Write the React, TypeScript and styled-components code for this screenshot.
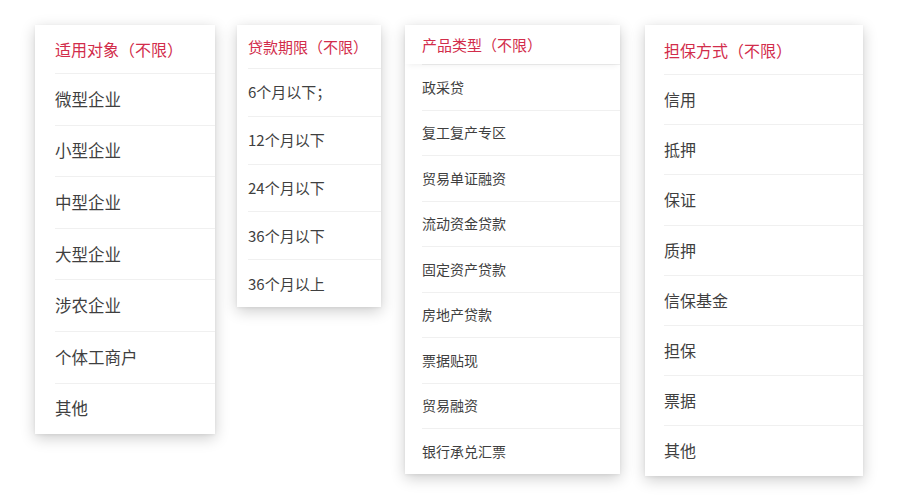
import React from "react";
import styled, { createGlobalStyle } from "styled-components";

const Global = createGlobalStyle`
  html, body { margin: 0; padding: 0; background: #ffffff; }
  body { font-family: "Noto Sans CJK SC", "Noto Sans", sans-serif; }
`;

const Page = styled.div`
  width: 900px;
  height: 500px;
  box-sizing: border-box;
  padding: 25px 0 0 35px;
  display: flex;
  align-items: flex-start;
  background: #ffffff;
`;

const Card = styled.div<{ $w: number; $ml: number }>`
  width: ${(p) => p.$w}px;
  margin-left: ${(p) => p.$ml}px;
  background: #ffffff;
  box-shadow: 0 4px 14px rgba(0, 0, 0, 0.2), 0 1px 3px rgba(0, 0, 0, 0.06);
  display: flex;
  flex-direction: column;
`;

const Header = styled.div<{ $h: number; $pad: number; $fs: number; $raised?: boolean }>`
  height: ${(p) => p.$h}px;
  display: flex;
  align-items: center;
  padding-left: ${(p) => p.$pad}px;
  font-size: ${(p) => p.$fs}px;
  color: #d22d4b;
  position: relative;
  box-shadow: ${(p) => (p.$raised ? "0 4px 6px -3px rgba(0,0,0,0.07)" : "none")};
  z-index: 1;
`;

const Row = styled.div<{ $h: number; $pad: number; $fs: number }>`
  height: ${(p) => p.$h}px;
  display: flex;
  align-items: center;
  padding-left: ${(p) => p.$pad}px;
  font-size: ${(p) => p.$fs}px;
  color: #3f3f3f;
  position: relative;
  &::before {
    content: "";
    position: absolute;
    top: 0;
    left: ${(p) => p.$pad}px;
    right: 0;
    height: 1px;
    background: #f0f0f0;
  }
`;

type Col = {
  title: string;
  items: string[];
  w: number;
  ml: number;
  hh: number;
  ih: number;
  pad: number;
  hfs: number;
  ifs: number;
  raised?: boolean;
};

const cols: Col[] = [
  {
    title: "适用对象（不限）",
    items: ["微型企业", "小型企业", "中型企业", "大型企业", "涉农企业", "个体工商户", "其他"],
    w: 180, ml: 0, hh: 48, ih: 51.6, pad: 20, hfs: 16, ifs: 16.5,
  },
  {
    title: "贷款期限（不限）",
    items: ["6个月以下；", "12个月以下", "24个月以下", "36个月以下", "36个月以上"],
    w: 144, ml: 22, hh: 43, ih: 47.8, pad: 11, hfs: 15, ifs: 15,
  },
  {
    title: "产品类型（不限）",
    items: ["政采贷", "复工复产专区", "贸易单证融资", "流动资金贷款", "固定资产贷款", "房地产贷款", "票据贴现", "贸易融资", "银行承兑汇票"],
    w: 215, ml: 24, hh: 39, ih: 45.5, pad: 17, hfs: 15, ifs: 14, raised: true,
  },
  {
    title: "担保方式（不限）",
    items: ["信用", "抵押", "保证", "质押", "信保基金", "担保", "票据", "其他"],
    w: 218, ml: 25, hh: 49, ih: 50.2, pad: 19, hfs: 16, ifs: 16,
  },
];

export default function App() {
  return (
    <>
      <Global />
      <Page>
        {cols.map((c) => (
          <Card key={c.title} $w={c.w} $ml={c.ml}>
            <Header $h={c.hh} $pad={c.pad} $fs={c.hfs} $raised={c.raised}>
              {c.title}
            </Header>
            {c.items.map((it) => (
              <Row key={it} $h={c.ih} $pad={c.pad} $fs={c.ifs}>
                {it}
              </Row>
            ))}
          </Card>
        ))}
      </Page>
    </>
  );
}
